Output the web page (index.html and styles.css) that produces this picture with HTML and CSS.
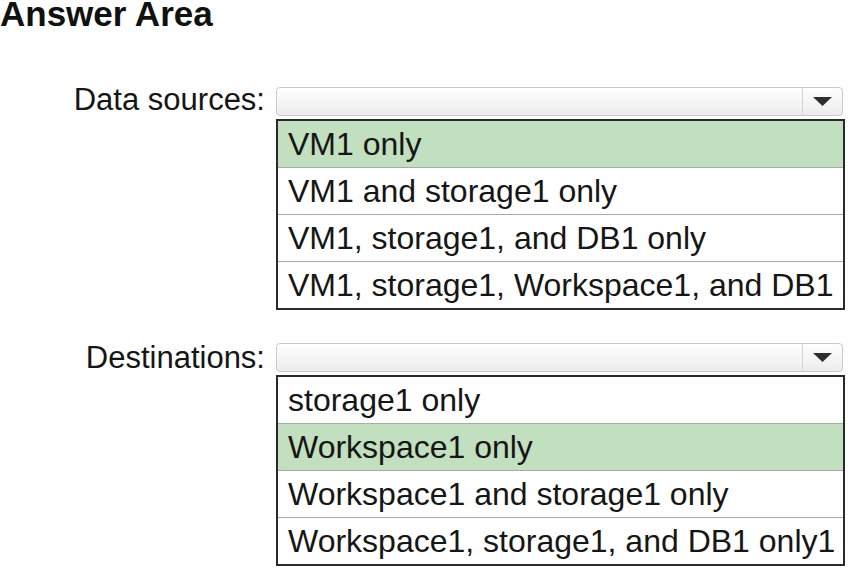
FILE: index.html
```html
<!DOCTYPE html>
<html lang="en">
<head>
  <meta charset="UTF-8">
  <meta name="viewport" content="width=device-width, initial-scale=1.0">
  <title>Answer Area</title>
  <link rel="stylesheet" href="styles.css">
</head>
<body>

  <h1 class="title">Answer Area</h1>

  <!-- Data sources -->
  <div class="field field-sources">
    <div class="field-label">Data sources:</div>
    <div class="dropdown">
      <span class="dropdown-arrow">
        <svg width="19" height="9" viewBox="0 0 19 9"><polygon points="0,0 19,0 9.5,9" fill="#2e2e2e"/></svg>
      </span>
    </div>
    <ul class="options">
      <li class="selected">VM1 only</li>
      <li>VM1 and storage1 only</li>
      <li>VM1, storage1, and DB1 only</li>
      <li>VM1, storage1, Workspace1, and DB1</li>
    </ul>
  </div>

  <!-- Destinations -->
  <div class="field field-destinations">
    <div class="field-label">Destinations:</div>
    <div class="dropdown">
      <span class="dropdown-arrow">
        <svg width="19" height="9" viewBox="0 0 19 9"><polygon points="0,0 19,0 9.5,9" fill="#2e2e2e"/></svg>
      </span>
    </div>
    <ul class="options">
      <li>storage1 only</li>
      <li class="selected">Workspace1 only</li>
      <li>Workspace1 and storage1 only</li>
      <li>Workspace1, storage1, and DB1 only1</li>
    </ul>
  </div>

</body>
</html>
```

FILE: styles.css
```css
/* page */
body {
  margin: 0;
  background-color: #fff;
  color: #161616;
  font-family: 'Liberation Sans', Arial, sans-serif;
}

.title {
  margin: 0;
  font-size: 35px;
  line-height: 28px;
  font-weight: bold;
  color: #111;
}

/* label + dropdown + option list */
.field {
  display: grid;
  grid-template-columns: 265px 569px;
  column-gap: 11px;
  row-gap: 3px;
}

.field-sources {
  margin-top: 59px;
}

.field-destinations {
  margin-top: 33px;
}

.field-label {
  text-align: right;
  font-size: 31px;
  line-height: 29px;
  white-space: nowrap;
}

.field-sources .field-label {
  margin-top: -2px;
}

.dropdown {
  display: flex;
  justify-content: flex-end;
  width: 567px;
  height: 29px;
  box-sizing: border-box;
  border: 1px solid #c9c9c9;
  border-radius: 4px;
  background: linear-gradient(#fefefe, #ededed);
}

.dropdown-arrow {
  display: flex;
  align-items: center;
  justify-content: center;
  width: 39px;
  border-left: 1px solid #d4d4d4;
}

.options {
  grid-column: 2;
  margin: 0;
  padding: 0;
  list-style: none;
  border: 2px solid #2a2a2a;
}

.options li {
  height: 46px;
  padding-left: 10px;
  font-size: 32px;
  line-height: 46px;
  white-space: nowrap;
  border-bottom: 1px solid #a9a9a9;
}

.options li:last-child {
  border-bottom: none;
}

.options li.selected {
  background-color: #c2dfbf;
}
```
